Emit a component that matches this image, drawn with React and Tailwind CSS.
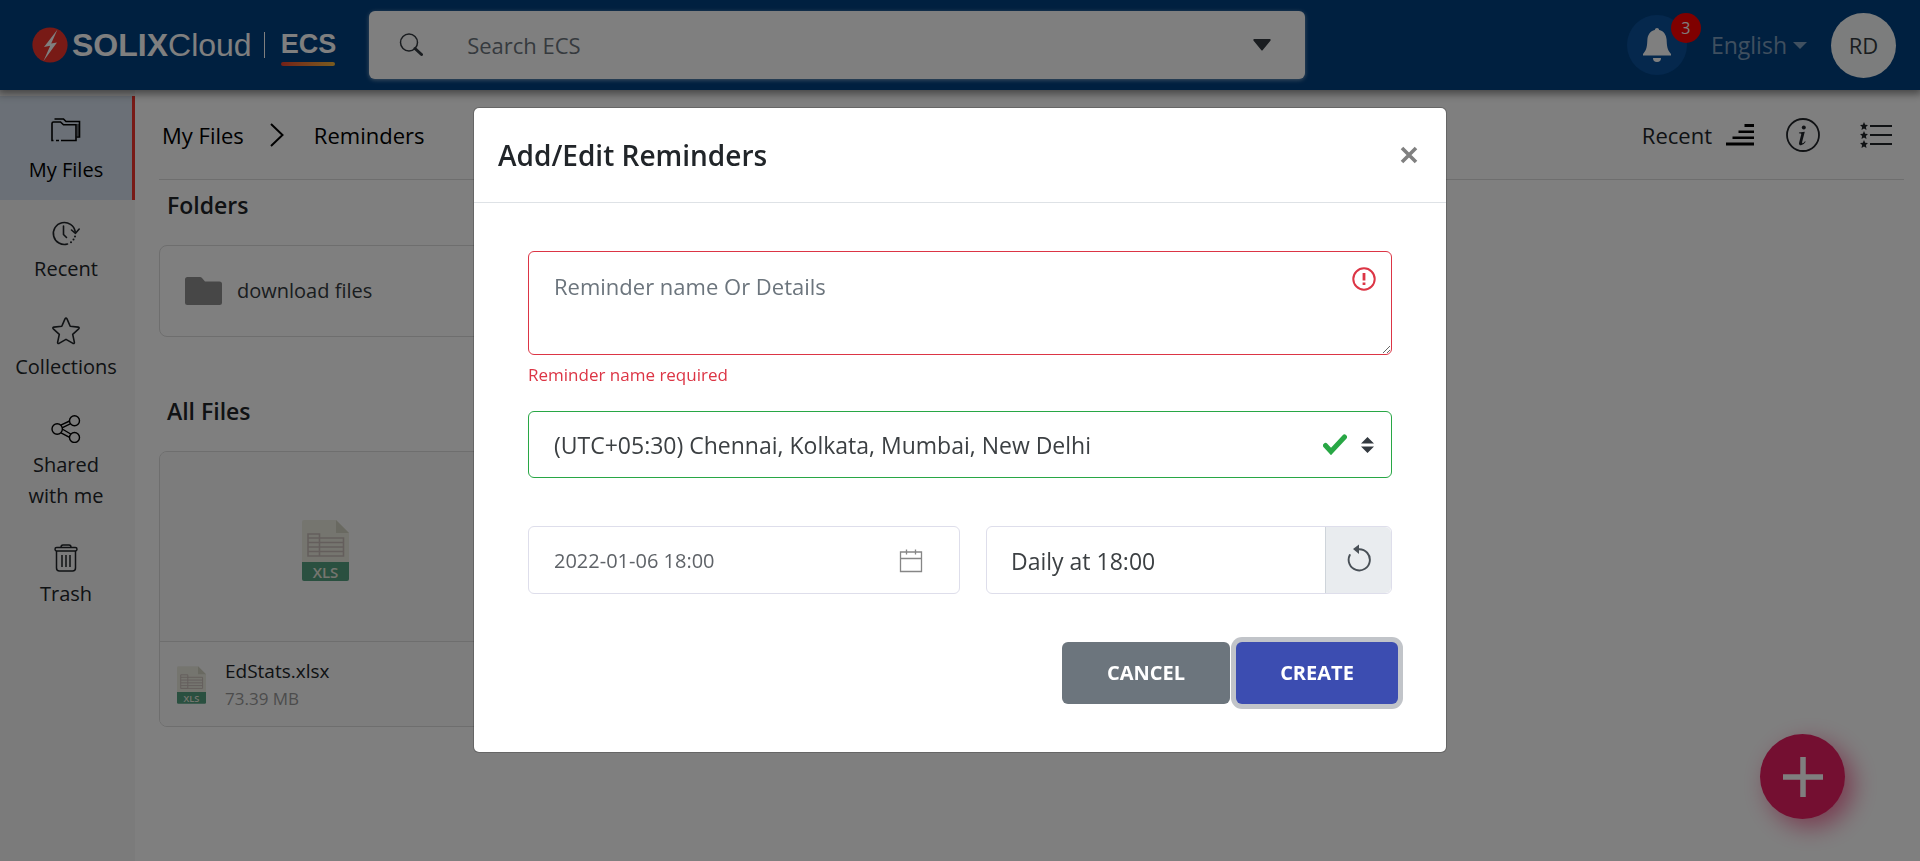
import React from "react";

function SolixMark() {
  return (
    <svg viewBox="0 0 36 36" className="size-9 shrink-0" aria-hidden="true">
      <circle cx="18" cy="18" r="17.6" fill="#f0352d" />
      <path d="M25.5 2.5 12 20l6.2-1.2L11.5 34 25 15.5l-5.8 1z" fill="#fff" />
    </svg>
  );
}

function SearchIcon() {
  return (
    <svg viewBox="0 0 24 24" className="size-6 shrink-0" fill="none" stroke="#343a40" aria-hidden="true">
      <circle cx="10" cy="9.5" r="8.5" strokeWidth="1.5" />
      <path d="m16 15.5 6.5 6" strokeWidth="3" strokeLinecap="round" />
    </svg>
  );
}

function BellIcon() {
  return (
    <svg viewBox="0 0 28 34" className="h-[34px] w-7" fill="#fff" aria-hidden="true">
      <path d="M14 0c1.2 0 2 .8 2.200 1.900C21 3 23.300 7 23.600 11.500c.4 6.500.4 10 4.400 14.500v1.500H0V26c4-4.500 4-8 4.400-14.500C4.700 7 7 3 11.800 1.900 12 .8 12.800 0 14 0z" />
      <path d="M10 30h8a4 4 0 0 1-8 0z" />
    </svg>
  );
}

function FolderOpenIcon() {
  return (
    <svg viewBox="0 0 30 28" className="h-7 w-[30px]" fill="none" stroke="#000" strokeWidth="1.6" aria-hidden="true">
      <path d="M2.500 24.500H1V7.500q0-1.500 1.500-1.500H9.500l3 2.800H25V24.500H10M5 24.500h3" />
      <path d="M3.500 3H12.500l2.500 2.500H28.500V21H25.500" />
      <path d="M27 8v12" strokeWidth="1" />
    </svg>
  );
}

function RecentIcon() {
  return (
    <svg viewBox="0 0 30 28" className="h-7 w-[30px]" fill="none" stroke="#212529" strokeWidth="1.6" strokeLinecap="round" strokeLinejoin="round" aria-hidden="true">
      <path d="M16.500 25A11 11 0 1 1 24.200 12.500" />
      <path d="m20.500 11 4 3.300 3.700-4.300" />
      <path d="M12.500 7v8.500l3 3" />
      <path d="M20 23.200h.01M22.500 20.600h.01M24 17.500h.01" strokeWidth="2" />
    </svg>
  );
}

function StarIcon() {
  return (
    <svg viewBox="0 0 30 28" className="h-7 w-[30px]" fill="none" stroke="#212529" strokeWidth="1.600" strokeLinejoin="round" aria-hidden="true">
      <path d="M14 1.900q1-1.600 2 0l3.200 7.400 8 .8q1.600.4.5 1.700l-6 5.500 1.700 8q.1 1.700-1.400 1.100L15 22.400l-7 4q-1.500.6-1.400-1.100l1.700-8-6-5.500q-1.100-1.300.5-1.700l8-.8z" />
    </svg>
  );
}

function ShareIcon() {
  return (
    <svg viewBox="0 0 30 28" className="h-7 w-[30px]" fill="none" stroke="#000" strokeWidth="1.4" aria-hidden="true">
      <circle cx="6.200" cy="14" r="5.200" />
      <circle cx="23.500" cy="5.800" r="5" />
      <circle cx="23.500" cy="22.500" r="5" />
      <path d="m9.800 10.200 8.800-4.200M11 12.800l8.200-4M11.200 14l8.500 5M10 17.800l8.600 4.600" />
    </svg>
  );
}

function TrashIcon() {
  return (
    <svg viewBox="0 0 30 28" className="h-7 w-[30px]" fill="none" stroke="#212529" strokeWidth="1.500" strokeLinejoin="round" aria-hidden="true">
      <rect x="4" y="3.500" width="22" height="3.500" rx="1.700" />
      <path d="M10 3.500q0-2.500 2-2.500h6q2 0 2 2.500M5.500 7v17q0 3 3 3h13q3 0 3-3V7M11 11v12M15 11v12M19 11v12" />
    </svg>
  );
}

function XlsIcon({ className }) {
  return (
    <svg viewBox="0 0 47 61" className={className} role="img" aria-label="XLS">
      <path d="M2 0h32l13 13v29H0V2q0-2 2-2z" fill="#ebebdf" />
      <path d="M34 0l13 13H34z" fill="#d2d2c2" />
      <path d="M0 42h47v17q0 2-2 2H2q-2 0-2-2z" fill="#54a080" />
      <g fill="none" stroke="#c8bdb9" strokeWidth="1.600">
        <path d="M6 36V14h11.500v22zM17.500 18H41.500v18H6M6 18h12M6 22.500h35.500M6 27h35.500M6 31.500h35.500" />
      </g>
      <text x="23.500" y="57.500" textAnchor="middle" fontFamily="Open Sans, sans-serif" fontWeight="600" fontSize="15" fill="#ebebdf">
        XLS
      </text>
    </svg>
  );
}

const navItems = [
  { label: "Recent", Icon: RecentIcon },
  { label: "Collections", Icon: StarIcon },
  { label: "Shared with me", Icon: ShareIcon },
  { label: "Trash", Icon: TrashIcon },
];

function Header() {
  return (
    <header className="relative z-10 flex h-[90px] items-center bg-[#004080] pl-8 pr-6 shadow-[0_2px_8px_2px_rgba(0,0,0,0.45)]">
      <a href="#home" className="flex items-center text-white">
        <SolixMark />
        <span className="ml-1 font-['Liberation_Sans',sans-serif] text-[32px] leading-9">
          <b>SOLIX</b>Cloud
        </span>
        <span className="ml-3 h-[26px] w-px bg-white" />
        <span className="ml-4 flex flex-col gap-0.5 pt-1 font-['Liberation_Sans',sans-serif] text-[27px] font-bold leading-8">
          ECS
          <span className="h-1 w-[54px] rounded-full bg-linear-to-r from-[#e8402f] to-[#f2b840]" />
        </span>
      </a>

      <form className="ml-[33px] flex h-[68px] w-[936px] items-center rounded-md bg-white pl-[30px] pr-[34px] shadow-[0_1px_4px_rgba(255,255,255,0.5)]">
        <SearchIcon />
        <input
          type="text"
          aria-label="Search ECS"
          placeholder="Search ECS"
          className="ml-11 min-w-0 flex-1 bg-transparent text-[22px] leading-8 outline-none placeholder:text-[#6c757d]"
        />
        <button type="button" aria-label="Search options">
          <svg viewBox="0 0 18 12" className="h-3 w-[18px]" aria-hidden="true">
            <path d="M1 0h16q1 0 .6 1.500L9.800 11q-.8 1-1.600 0L.4 1.500Q0 0 1 0z" fill="#343a40" />
          </svg>
        </button>
      </form>

      <div className="ml-auto flex items-center">
        <button type="button" aria-label="Notifications" className="relative flex size-[60px] items-center justify-center rounded-full bg-[#0a509a]">
          <BellIcon />
          <span className="absolute -right-3.5 -top-0.5 flex size-[30px] items-center justify-center rounded-full bg-[#ff0000] text-base text-white">
            3
          </span>
        </button>
        <button type="button" className="ml-6 flex items-center gap-1.5 text-[23px] leading-8 text-white/50">
          English
          <svg viewBox="0 0 14 7" className="h-[7px] w-3.5" fill="currentColor" aria-hidden="true">
            <path d="M0 0h14L7 7z" />
          </svg>
        </button>
        <button type="button" className="ml-6 flex size-[65px] items-center justify-center rounded-full bg-[#f8fafa] text-[22px] text-[#343a40]">
          RD
        </button>
      </div>
    </header>
  );
}

function Sidebar() {
  return (
    <nav className="w-[135px] shrink-0 bg-[#f6f6f6] pt-1.5 text-center text-xl leading-[31px] text-[#212529]">
      <a href="#files" className="flex flex-col items-center gap-2.5 border-r-[3px] border-[#f0352d] bg-[#d6e1ee] pb-[15px] pt-5 leading-[31px] text-black">
        <FolderOpenIcon />
        My Files
      </a>
      {navItems.map(({ label, Icon }) => (
        <a key={label} href="#nav" className="flex flex-col items-center gap-1.5 border-r-[3px] border-transparent px-2 pb-3.5 pt-[19px]">
          <Icon />
          <span className="max-w-[106px] leading-[31px]">{label}</span>
        </a>
      ))}
    </nav>
  );
}

function Toolbar() {
  return (
    <div className="flex h-[84px] items-center border-b border-[#dcdcdc] pb-1.5 pl-[3px] pr-3 text-[22px] leading-8 text-black">
      <a href="#files">My Files</a>
      <svg viewBox="0 0 14 24" className="ml-[26px] h-6 w-3.5" fill="none" stroke="#000" strokeWidth="2" aria-hidden="true">
        <path d="M1 1l11.500 11L1 23" />
      </svg>
      <span className="ml-[30px]">Reminders</span>
      <button type="button" className="ml-auto flex items-center gap-3.5 text-[#212529]">
        Recent
        <svg viewBox="0 0 28 22" className="h-[22px] w-7" fill="#000" aria-hidden="true">
          <path d="M18.500 0H28v3h-9.500zM12.500 6.500H28v2.500H12.500zM6.500 12.500H28V15H6.500zM0 18.500H28v3H0z" />
        </svg>
      </button>
      <button type="button" aria-label="Details" className="ml-8">
        <svg viewBox="0 0 34 34" className="size-[34px]" aria-hidden="true">
          <circle cx="17" cy="17" r="16" fill="none" stroke="#212529" strokeWidth="1.800" />
          <circle cx="17.800" cy="9.500" r="2" fill="#212529" />
          <path d="M13 14.500l5.800-.8-2.600 10q-.4 1.800.5 1.600.9-.2 2.300-2l.7.5q-2.300 3.500-4.700 3.500-2.600 0-1.800-3.100l2-7.700q.3-1-.6-1.100l-1.700-.2z" fill="#212529" />
        </svg>
      </button>
      <button type="button" aria-label="List view" className="ml-10">
        <svg viewBox="0 0 32 26" className="h-[26px] w-8" fill="#212529" aria-hidden="true">
          {[4, 13, 22].map((y) => (
            <g key={y} transform={`translate(0 ${y})`}>
              <path d="M4 -4l1.200 2.700 2.800.3-2.100 2 .6 2.900L4 2.500 1.500 3.900l.6-2.900L0-1l2.800-.3z" />
              <rect x="10" y="-1" width="22" height="2" />
            </g>
          ))}
        </svg>
      </button>
    </div>
  );
}

function Files() {
  return (
    <main className="min-w-0 flex-1 bg-white pl-6 pr-4 pt-1.5">
      <Toolbar />
      <h2 className="mt-[9px] pl-2 text-[23px] font-semibold leading-8 text-[#212529]">Folders</h2>
      <a href="#folder" className="mt-6 flex h-[92px] w-[332px] items-center gap-[15px] rounded-lg border border-[#dcdcdc] pl-[25px] text-xl text-[#343a40]">
        <svg viewBox="0 0 37 28" className="h-7 w-[37px]" fill="#8f8f8f" aria-hidden="true">
          <path d="M2.500 0H15q1.200 0 2 1l3 3.500h14.500Q37 4.500 37 7v18.500q0 2.500-2.500 2.500h-32Q0 28 0 25.500v-23Q0 0 2.500 0z" />
        </svg>
        download files
      </a>
      <h2 className="mt-[58px] pl-2 text-[23px] font-semibold leading-8 text-[#212529]">All Files</h2>
      <a href="#file" className="mt-6 block w-[332px] overflow-hidden rounded-lg border border-[#dcdcdc]">
        <div className="flex h-[190px] items-center justify-center border-b border-[#dcdcdc] bg-[#f8f8f8] pt-2">
          <XlsIcon className="h-[61px] w-[47px]" />
        </div>
        <div className="flex h-[84px] items-center gap-[19px] bg-[#fbfbfb] pl-[17px] pt-0.5">
          <XlsIcon className="h-[38px] w-[29px]" />
          <div>
            <div className="text-[19px] leading-7 text-[#212529]">EdStats.xlsx</div>
            <div className="text-[17px] leading-7 text-[#999]">73.39 MB</div>
          </div>
        </div>
      </a>
    </main>
  );
}

function ReminderDialog() {
  return (
    <div className="fixed inset-0 z-30 flex items-start justify-center bg-black/50 pt-[107px]">
      <div role="dialog" aria-modal="true" aria-labelledby="dialog-title" className="w-full max-w-[974px] rounded-md border border-black/20 bg-white bg-clip-padding">
        <div className="flex h-[95px] items-center justify-between border-b border-[#dee2e6] pl-6 pr-7">
          <h1 id="dialog-title" className="text-[28px] font-semibold leading-10 text-[#212529]">
            Add/Edit Reminders
          </h1>
          <button type="button" aria-label="Close">
            <svg viewBox="0 0 18 18" className="size-[18px]" stroke="#808080" strokeWidth="3.600" aria-hidden="true">
              <path d="M2 2l14 14M16 2L2 16" />
            </svg>
          </button>
        </div>

        <form className="px-[54px] pt-12">
          <div className="relative">
            <textarea
              aria-label="Reminder name Or Details"
              aria-describedby="name-error"
              placeholder="Reminder name Or Details"
              className="block h-[104px] w-full rounded-md border border-[#dc3545] px-[25px] py-[18px] text-[22px] leading-8 outline-none placeholder:text-[#6c757d]"
            />
            <svg viewBox="0 0 24 24" className="pointer-events-none absolute right-4 top-4 size-6" fill="none" stroke="#dc3545" aria-hidden="true">
              <circle cx="12" cy="12" r="10.700" strokeWidth="2" />
              <path d="M12 6v7.500M12 15.500v2.500" strokeWidth="2.800" />
            </svg>
          </div>
          <p id="name-error" className="mt-2 text-[17px] leading-6 text-[#dc3545]">
            Reminder name required
          </p>

          <div className="relative mt-6">
            <select
              aria-label="Time zone"
              className="block h-[67px] w-full appearance-none rounded-md border border-[#28a745] bg-white px-[25px] pt-0.5 text-[23px] text-[#3c4043] outline-none"
            >
              <option>(UTC+05:30) Chennai, Kolkata, Mumbai, New Delhi</option>
            </select>
            <div className="pointer-events-none absolute inset-y-0 right-[18px] flex items-center gap-3.5">
              <svg viewBox="0 0 24 21" className="h-[21px] w-6" fill="none" stroke="#28a745" strokeWidth="5" strokeLinecap="round" aria-hidden="true">
                <path d="M2.500 11.500l5.500 6L21.500 3" strokeLinejoin="miter" />
              </svg>
              <svg viewBox="0 0 13 16" className="h-4 w-[13px]" fill="#343a40" aria-hidden="true">
                <path d="M6.500 0L13 6.500H0zM6.500 16L13 9.500H0z" />
              </svg>
            </div>
          </div>

          <div className="mt-12 grid grid-cols-[432fr_406fr] gap-[26px]">
            <div className="flex h-[68px] items-center rounded-md border border-[#dedeeb] pl-[25px] pr-9 pt-0.5">
              <input
                type="text"
                aria-label="Start date"
                defaultValue="2022-01-06 18:00"
                className="min-w-0 flex-1 text-xl leading-7 text-[#5f6368] outline-none"
              />
              <button type="button" aria-label="Open calendar">
                <svg viewBox="0 0 24 24" className="size-6" fill="none" stroke="#868686" aria-hidden="true">
                  <path d="M1.500 3h21v19.500h-21zM1.500 9.500h21M7.500 .5v5M16.500 .5v5" strokeWidth="1.300" />
                </svg>
              </button>
            </div>
            <div className="flex h-[68px] rounded-md border border-[#dedeeb]">
              <input
                type="text"
                aria-label="Repeat"
                defaultValue="Daily at 18:00"
                className="min-w-0 flex-1 rounded-l-md pl-6 pt-0.5 text-[23px] leading-8 text-[#3c4043] outline-none"
              />
              <button type="button" aria-label="Reset repeat" className="flex w-[66px] items-center justify-center rounded-r-md border-l border-[#ced4da] bg-[#e9ecef] pb-1">
                <svg viewBox="0 0 24 28" className="h-7 w-6" fill="none" stroke="#495057" aria-hidden="true">
                  <path d="M2.800 11A10.600 10.600 0 1 0 12 5.200" strokeWidth="1.900" strokeLinecap="round" />
                  <path d="M12 .5v9.500L6 5z" fill="#495057" stroke="none" />
                </svg>
              </button>
            </div>
          </div>
        </form>

        <div className="flex justify-end gap-1.5 px-12 py-12">
          <button type="button" className="h-[62px] w-[168px] rounded-md bg-[#6c757d] text-xl font-bold text-white">
            CANCEL
          </button>
          <button type="button" className="h-[62px] w-[162px] rounded-md bg-[#3c4db1] text-xl font-bold text-white ring-[5px] ring-[#c1c4c9]">
            CREATE
          </button>
        </div>
      </div>
    </div>
  );
}

export default function App() {
  return (
    <div className="flex min-h-screen flex-col bg-white font-['Open_Sans','Noto_Sans',sans-serif]">
      <Header />
      <div className="flex flex-1">
        <Sidebar />
        <Files />
      </div>
      <button
        type="button"
        aria-label="Add"
        className="fixed bottom-[42px] right-[75px] z-20 flex size-[85px] items-center justify-center rounded-full bg-[#e91e63] shadow-[8px_8px_24px_rgba(233,30,99,0.6)]"
      >
        <svg viewBox="0 0 40 40" className="size-10" stroke="#fff" strokeWidth="5.500" aria-hidden="true">
          <path d="M20 0v40M0 20h40" />
        </svg>
      </button>
      <ReminderDialog />
    </div>
  );
}
